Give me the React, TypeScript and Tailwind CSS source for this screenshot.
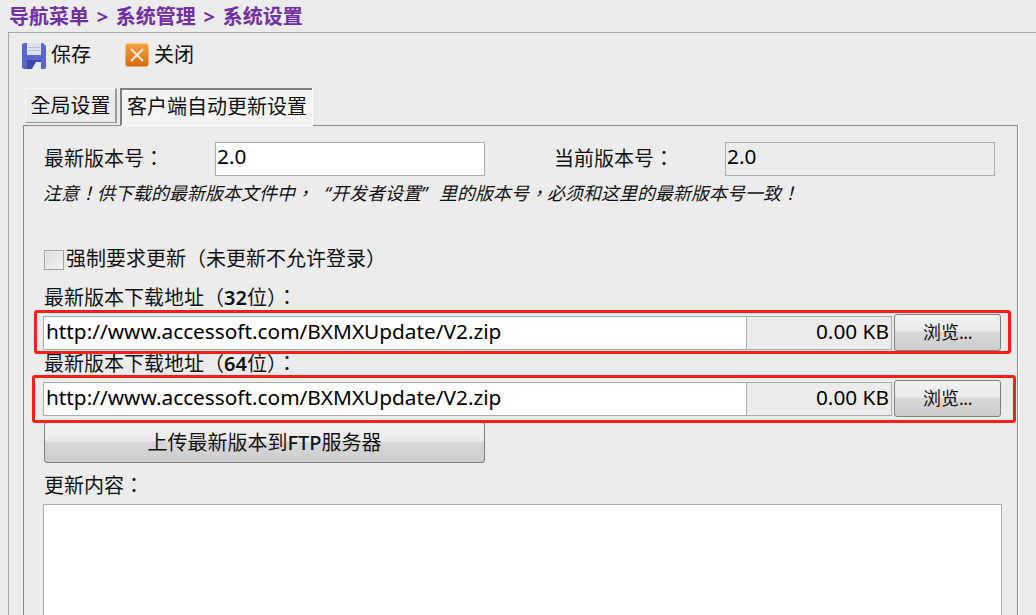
import type { ReactNode } from "react";

const font = "font-['Noto_Sans','Noto_Sans_CJK_TC',sans-serif]";

const SaveIcon = () => (
  <svg width="26" height="28" viewBox="0 0 26 28">
    <path d="M3 1h19l3 3v21a2 2 0 0 1-2 2H3a2 2 0 0 1-2-2V3a2 2 0 0 1 2-2z" fill="#5a66cc" />
    <rect x="6" y="1" width="14" height="12" fill="#dfe3ee" />
    <rect x="7" y="5" width="12" height="1" fill="#b9bfd6" />
    <rect x="7" y="8" width="12" height="1" fill="#b9bfd6" />
    <rect x="6" y="18" width="14" height="9" fill="#3f49ab" />
    <path d="M11 27l4-7h5v7z" fill="#e8e8f0" />
  </svg>
);

const CloseIcon = () => (
  <svg width="26" height="26" viewBox="0 0 26 26">
    <defs>
      <linearGradient id="closeFill" x1="0" y1="0" x2="0" y2="1">
        <stop offset="0" stopColor="#f6a349" />
        <stop offset="1" stopColor="#d2690f" />
      </linearGradient>
    </defs>
    <rect x="1" y="1" width="24" height="24" rx="3" fill="url(#closeFill)" stroke="#f7e6d4" />
    <path d="M7 7l12 12M19 7L7 19" stroke="#fbeedd" strokeWidth="2" />
  </svg>
);

const PushButton = ({ children, className }: { children: ReactNode; className: string }) => (
  <button
    className={`${className} shrink-0 rounded-[3px] border border-[#7f7f7f] bg-[linear-gradient(#f2f2f2_0%,#ebebeb_45%,#d8d8d8_50%,#cdcdcd_100%)] text-[#111]`}
  >
    {children}
  </button>
);

const UrlRow = ({ className }: { className: string }) => (
  <div className={`${className} ml-[19px] flex items-center`}>
    <div className="flex h-[34px] w-[704px] items-center border border-[#acacac] bg-white pb-[2px] pl-[2px] text-[20.8px] text-black">
      http://www.accessoft.com/BXMXUpdate/V2.zip
    </div>
    <div className="flex h-[34px] w-[145px] items-center justify-end border border-l-0 border-[#acacac] pb-[2px] pr-[2px] text-[20.8px] text-black">
      0.00 KB
    </div>
    <PushButton className="ml-[2px] h-[37px] w-[107px] text-[18px]">
      浏览<span className="tracking-[-0.5px]">...</span>
    </PushButton>
  </div>
);

export default function App() {
  return (
    <div className={`${font} relative h-[615px] w-[1036px] overflow-hidden bg-[#ececec]`}>
      <div className="flex h-[32px] items-center pl-[9px] pt-[2px] text-[20px] font-bold [word-spacing:2.5px] text-[#7030a0]">
        导航菜单 &gt; 系统管理 &gt; 系统设置
      </div>
      <div className="ml-[8px] h-[583px] border-l border-t border-[#a9a9a9]">
        <div className="flex h-[55px] items-start pl-[12px] pt-[9px] text-[20px] text-[#111]">
          <SaveIcon />
          <span className="ml-[4px] leading-[26px]">保存</span>
          <div className="ml-[33px]">
            <CloseIcon />
          </div>
          <span className="ml-[4px] leading-[26px]">关闭</span>
        </div>
        <div className="flex pl-[16px] text-[20px] text-[#111]">
          <div className="flex h-[35px] w-[92px] items-center justify-center border-y border-l border-r-2 border-[#f8f8f8] border-r-[#9a9a9a] border-b-[#9a9a9a] bg-[#ececec]">
            全局设置
          </div>
          <div className="ml-[3px] flex h-[37px] w-[192px] items-center justify-center border-l-2 border-t-2 border-[#7f7f7f] bg-[#f4f4f4] pb-[2px] shadow-[1px_1px_0_#fff]">
            客户端自动更新设置
          </div>
        </div>
        <div className="ml-[14px] h-[491px] w-[995px] border-l border-r border-t border-[#8c8c8c] text-[20px] text-[#111] shadow-[1px_0_0_#fff]">
          <div className="mt-[16px] flex h-[34px] items-center">
            <span className="ml-[20px] w-[171px]">最新版本号：</span>
            <div className="flex h-[34px] w-[270px] items-center border border-[#acacac] bg-white pb-[4px] pl-[1px] text-[20.8px] text-black">
              2.0
            </div>
            <span className="ml-[69px] w-[171px]">当前版本号：</span>
            <div className="flex h-[34px] w-[270px] items-center border border-[#acacac] pb-[4px] pl-[1px] text-[20.8px] text-black">
              2.0
            </div>
          </div>
          <div className="ml-[19px] mt-[3px] h-[28px] text-[18px] leading-[28px] italic">
            注意！供下载的最新版本文件中，
            <span className="inline-block w-[18px] text-right">“</span>
            开发者设置
            <span className="inline-block w-[18px] text-left">”</span>
            里的版本号，必须和这里的最新版本号一致！
          </div>
          <div className="ml-[20px] mt-[37px] flex h-[28px] items-start">
            <div className="mt-[6px] h-[20px] w-[20px] border border-[#a0a0a0] bg-[linear-gradient(135deg,#d8dade,#f4f4f6)] shadow-[inset_0_0_0_1px_#f0f0f0]" />
            <span className="ml-[2px] leading-[30px]">强制要求更新（未更新不允许登录）</span>
          </div>
          <div className="ml-[20px] mt-[11px] h-[28px] leading-[30px]">
            最新版本下载地址（<span className="font-semibold">32</span>位）：
          </div>
          <UrlRow className="mt-[3px]" />
          <div className="ml-[20px] mt-[-2px] h-[28px] leading-[30px]">
            最新版本下载地址（<span className="font-semibold">64</span>位）：
          </div>
          <UrlRow className="mt-[3px]" />
          <PushButton className="ml-[20px] mt-[5px] h-[41px] w-[441px] text-[20px]">
            上传最新版本到<span className="font-medium">FTP</span>服务器
          </PushButton>
          <div className="ml-[20px] mt-[8px] h-[28px] leading-[30px]">更新内容：</div>
          <div className="ml-[19px] mt-[5px] h-[120px] w-[959px] border border-[#acacac] bg-white" />
        </div>
      </div>
      <div className="absolute left-[34px] top-[310px] h-[44px] w-[977px] rounded-[3px] border-[3px] border-[#fb2116]" />
      <div className="absolute left-[32px] top-[375px] h-[48px] w-[984px] rounded-[3px] border-[3px] border-[#fb2116]" />
    </div>
  );
}
